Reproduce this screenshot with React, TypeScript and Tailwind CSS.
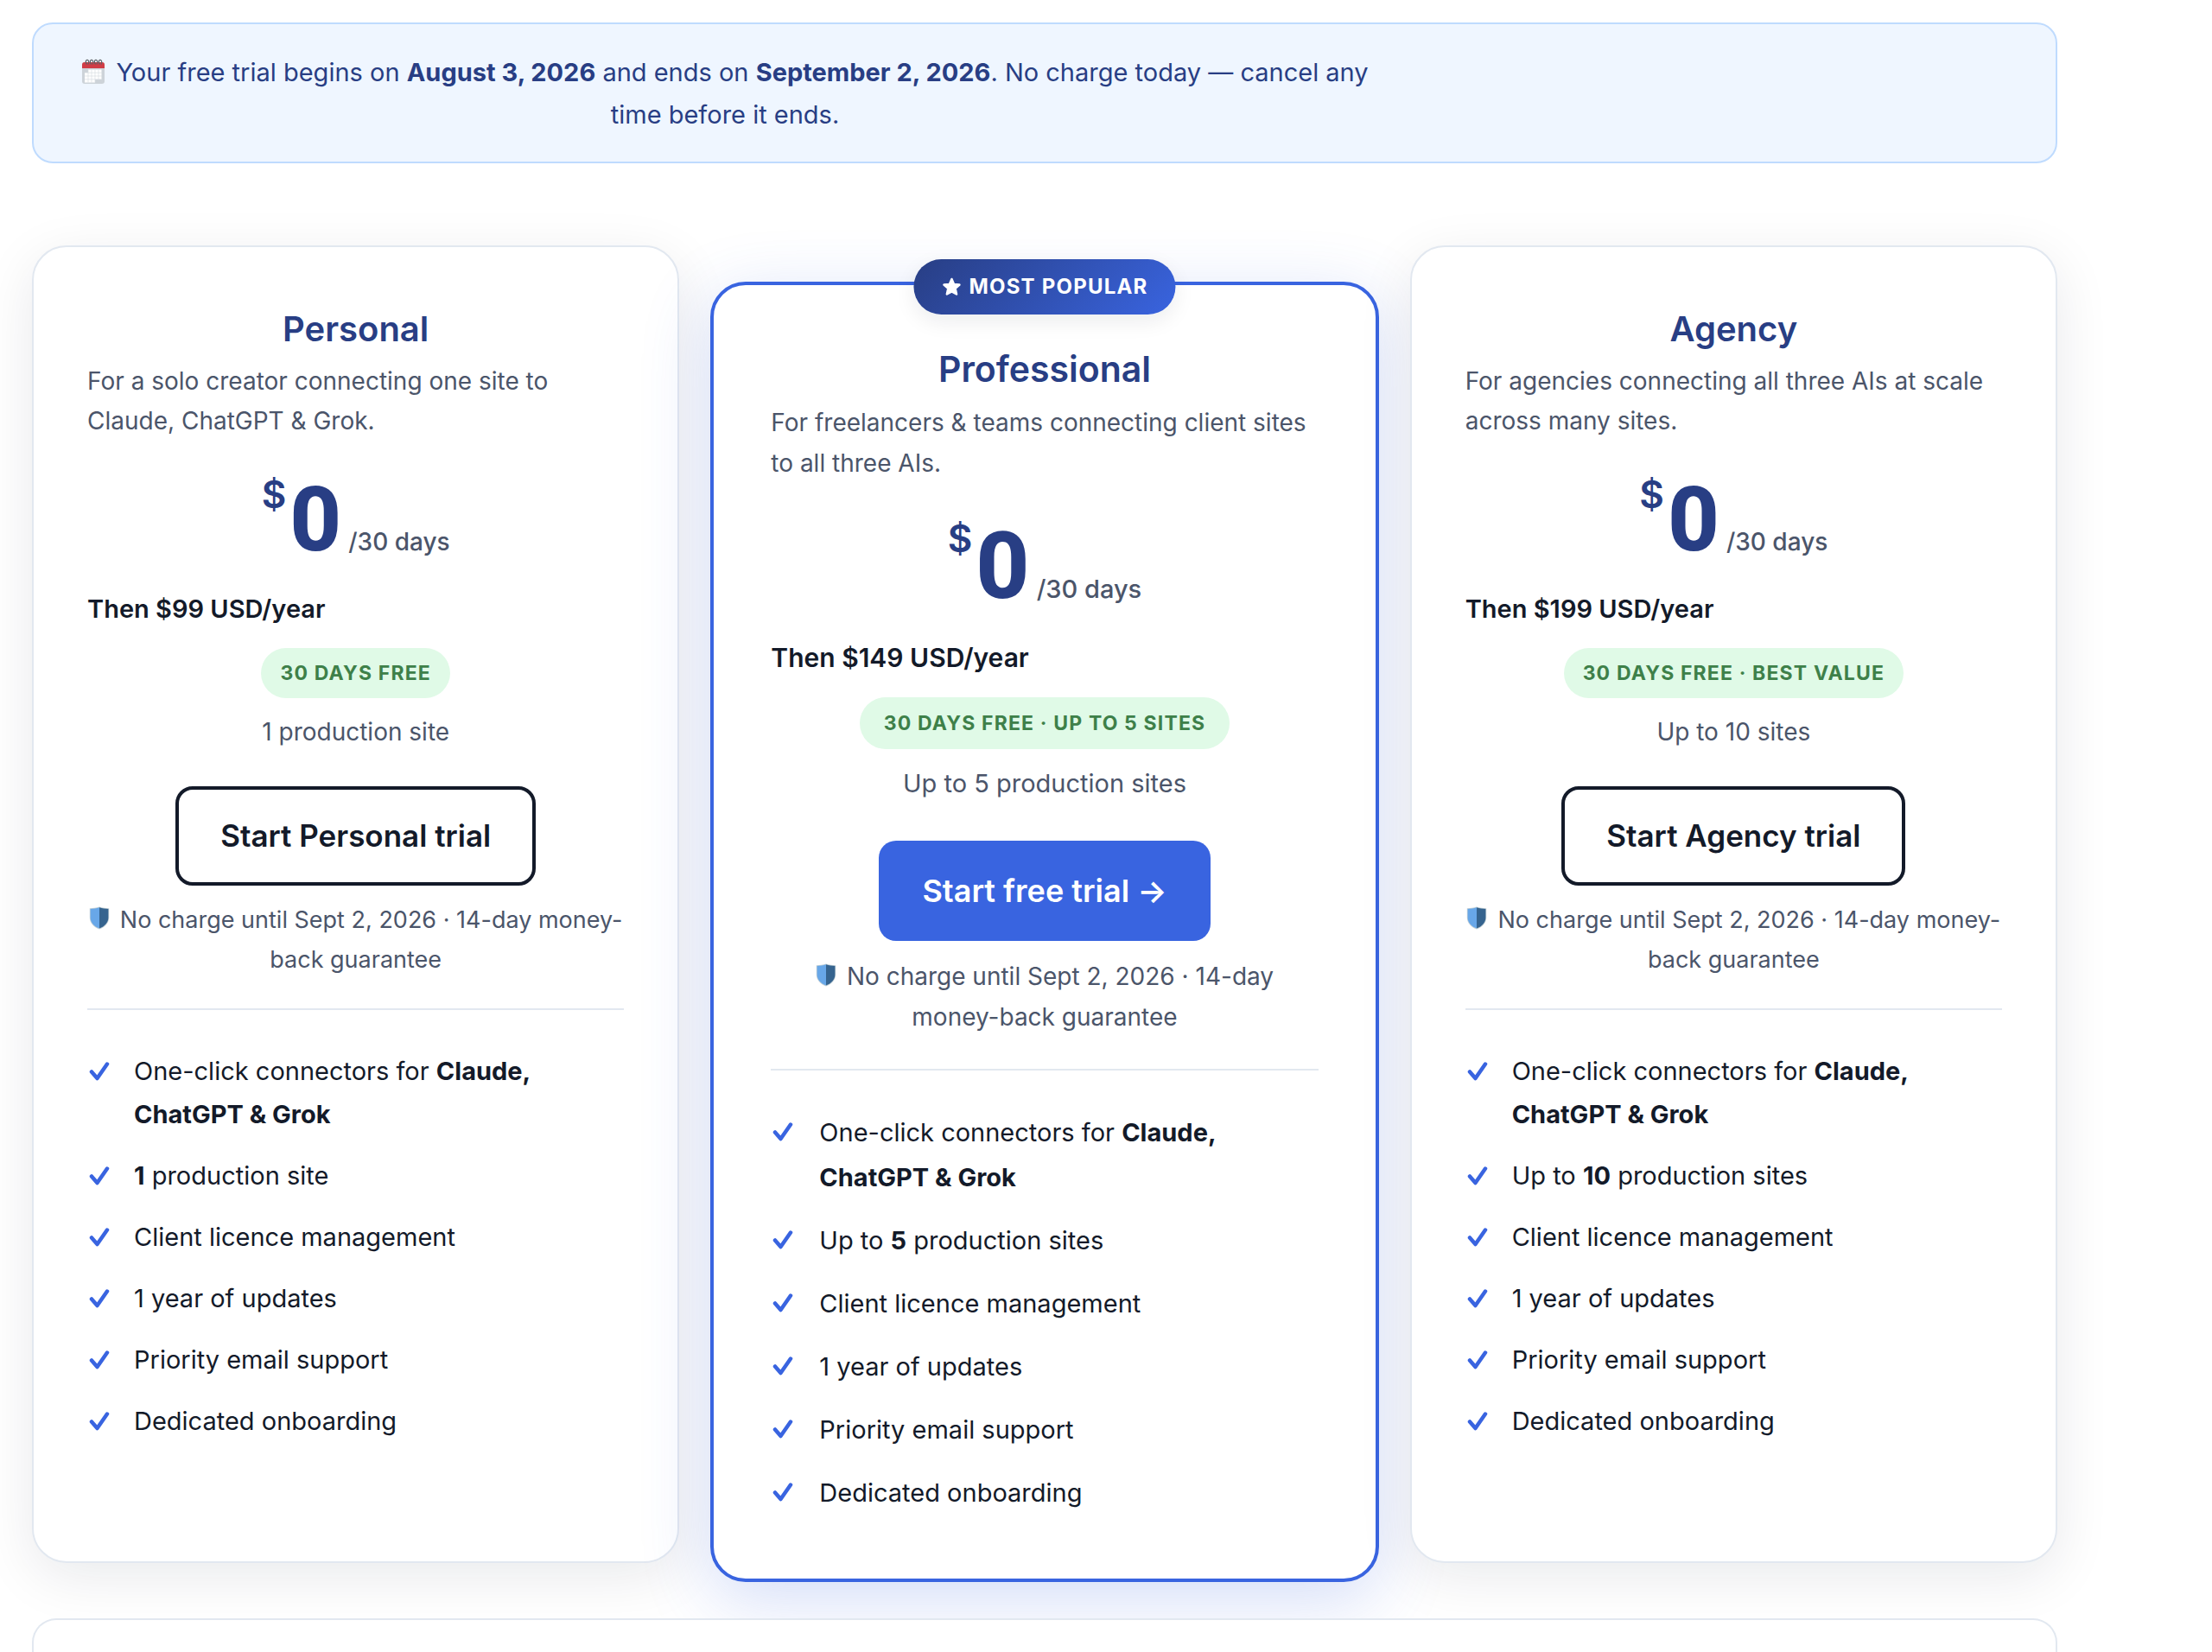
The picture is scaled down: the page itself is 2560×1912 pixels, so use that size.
import React from 'react';
import clsx from 'clsx';

interface Plan {
  name: string;
  description: string;
  price: string;
  badge: string;
  sites: string;
  cta: string;
  siteFeature: React.ReactNode;
  featured?: boolean;
}

const plans: Plan[] = [
  {
    name: 'Personal',
    description: 'For a solo creator connecting one site to Claude, ChatGPT & Grok.',
    price: 'Then $99 USD/year',
    badge: '30 days free',
    sites: '1 production site',
    cta: 'Start Personal trial',
    siteFeature: (
      <>
        <strong className="font-bold">1</strong> production site
      </>
    )
  },
  {
    name: 'Professional',
    description: 'For freelancers & teams connecting client sites to all three AIs.',
    price: 'Then $149 USD/year',
    badge: '30 days free · Up to 5 sites',
    sites: 'Up to 5 production sites',
    cta: 'Start free trial →',
    siteFeature: (
      <>
        Up to <strong className="font-bold">5</strong> production sites
      </>
    ),
    featured: true
  },
  {
    name: 'Agency',
    description: 'For agencies connecting all three AIs at scale across many sites.',
    price: 'Then $199 USD/year',
    badge: '30 days free · Best value',
    sites: 'Up to 10 sites',
    cta: 'Start Agency trial',
    siteFeature: (
      <>
        Up to <strong className="font-bold">10</strong> production sites
      </>
    )
  }
];

const CalendarIcon = () => (
  <svg viewBox="0 0 28 30" className="mr-3 inline-block h-[30px] w-7 align-[-4px]" aria-hidden="true">
    <rect x="1" y="4" width="26" height="25" rx="3" fill="#cdd3d9" />
    <path d="M1 11V7a3 3 0 0 1 3-3h20a3 3 0 0 1 3 3v4z" fill="#d03c46" />
    <path d="M8 12.5h15.500v11.500h-7.500v3.500h-12v-11.500h4z" fill="#fff" />
    <path d="M8 12.500v15M12 12.500v15M16 12.500v15M20 12.500v12M4 16.200h20M4 20h20M4 23.800h20" stroke="#d9dee3" strokeWidth=".7" />
    <g fill="none" stroke="#5c6166" strokeWidth="1.200">
      <path d="M6.500 6.500C3.500 2 7 0 8.500 2.500c.5 1 .5 2.500-.5 4" />
      <path d="M11.500 6.500C8.500 2 12 0 13.500 2.500c.5 1 .5 2.500-.5 4" />
      <path d="M16.500 6.500C13.500 2 17 0 18.500 2.500c.5 1 .5 2.500-.5 4" />
      <path d="M21.500 6.500C18.500 2 22 0 23.500 2.500c.5 1 .5 2.500-.5 4" />
    </g>
  </svg>
);

const ShieldIcon = () => (
  <svg viewBox="0 0 24 27" className="mr-3 inline-block h-[27px] w-6 align-[-2px]" aria-hidden="true">
    <path d="M12 .5C8.500 1.800 4.500 2.200.8 2.200V13c0 6 4.500 11 11.200 13.500C18.700 24 23.200 19 23.200 13V2.200C19.500 2.200 15.500 1.800 12 .5z" fill="#c3d0d6" />
    <path d="M12 1.300C8.700 2.500 5 3 1.600 3v10c0 5.500 4.200 10.200 10.400 12.600z" fill="#68a7e8" />
    <path d="M12 1.300C15.300 2.500 19 3 22.400 3v10c0 5.500-4.200 10.200-10.400 12.600z" fill="#36648f" />
  </svg>
);

const CheckIcon = () => (
  <svg viewBox="0 0 24 24" className="mt-[13px] ml-0.5 h-6 w-6 shrink-0" aria-hidden="true">
    <path d="M3 12.500 9.500 20 21 3.500" fill="none" stroke="#3964e0" strokeWidth="4.500" strokeLinecap="round" strokeLinejoin="round" />
  </svg>
);

const StarIcon = () => (
  <svg viewBox="0 0 24 24" className="h-6 w-6" aria-hidden="true">
    <path
      d="m12 3 2.600 6 6.400.6-4.800 4.300 1.400 6.600L12 17.300l-5.600 3.200 1.400-6.600L3 9.600 9.400 9z"
      fill="#fff"
      stroke="#fff"
      strokeWidth="2.500"
      strokeLinejoin="round"
    />
  </svg>
);

const PlanCard = ({ plan }: { plan: Plan }) => {
  const { featured } = plan;
  const features: React.ReactNode[] = [
    <>
      One-click connectors for <strong className="font-bold">Claude, ChatGPT & Grok</strong>
    </>,
    plan.siteFeature,
    'Client licence management',
    '1 year of updates',
    'Priority email support',
    'Dedicated onboarding'
  ];

  return (
    <section
      className={clsx(
        'relative flex flex-col items-center bg-white text-[#4b556a]',
        featured
          ? 'mt-[42px] -mb-[22px] rounded-[41px] border-4 border-[#3964e0] px-[66px] pt-[70px] pb-[73px] shadow-[0_20px_80px_rgba(57,100,224,0.22)]'
          : 'rounded-[40px] border-2 border-[#e2e8f0] px-[62px] pt-[69px] pb-[137px] shadow-[0_16px_64px_rgba(15,23,42,0.09)]'
      )}
    >
      {featured && (
        <div className="absolute -top-[30px] left-1/2 flex h-16 -translate-x-1/2 items-center gap-2 rounded-full bg-linear-135 from-[#283e84] to-[#3964e0] px-8 text-2xl font-bold tracking-wider whitespace-nowrap text-white uppercase shadow-[0_8px_24px_rgba(15,23,42,0.08)]">
          <StarIcon />
          Most popular
        </div>
      )}
      <h2
        className={clsx(
          'font-semibold text-[#283e84]',
          featured ? 'text-[41px] leading-[54px]' : 'text-[40px] leading-[52px]'
        )}
      >
        {plan.name}
      </h2>
      <p className={clsx('w-full text-[28px]', featured ? 'mt-3 leading-[47px]' : 'mt-[11px] leading-[46px]')}>
        {plan.description}
      </p>
      <div
        className={clsx(
          'flex items-baseline text-[#283e84]',
          featured ? 'mt-[42px] h-[104px]' : 'mt-[41px] h-[100px]'
        )}
      >
        <span className="mr-1 self-start text-[44px] leading-[42px] font-semibold">$</span>
        <span
          className={clsx(
            "font-['Roboto',sans-serif] font-extrabold",
            featured ? 'text-[108px] leading-[106px]' : 'text-[104px] leading-[102px]'
          )}
        >
          0
        </span>
        <span className={clsx('ml-2 font-medium text-[#4b556a]', featured ? 'text-[29px]' : 'text-[28px]')}>/30 days</span>
      </div>
      <p
        className={clsx(
          'mt-[31px] w-full font-semibold text-[#131a29]',
          featured ? 'text-[30px] leading-[48px]' : 'text-[29px] leading-[46px]'
        )}
      >
        {plan.price}
      </p>
      <p
        className={clsx(
          'mt-[22px] flex items-center rounded-full bg-[#e0fae7] text-[23px] font-bold tracking-wider text-[#3e8049] uppercase',
          featured ? 'h-[60px] px-7' : 'h-[58px] px-[22px]'
        )}
      >
        {plan.badge}
      </p>
      <p className={clsx('mt-4', featured ? 'text-[29px] leading-[48px]' : 'text-[28px] leading-[46px]')}>{plan.sites}</p>
      <button
        type="button"
        className={clsx(
          'cursor-pointer rounded-[20px] font-semibold',
          featured
            ? 'mt-[42px] h-[116px] bg-[#3964e0] px-[50px] text-[36px] text-white'
            : 'mt-10 h-[115px] border-4 border-[#131a29] bg-white px-12 text-[35px] text-[#131a29]'
        )}
      >
        {plan.cta}
      </button>
      <p
        className={clsx(
          'w-full text-center',
          featured ? 'mt-[18px] text-[28px] leading-[47px]' : 'mt-[17px] text-[27px] leading-[46px]'
        )}
      >
        <ShieldIcon />
        No charge until Sept 2, 2026 · 14-day money-back guarantee
      </p>
      <ul
        className={clsx(
          'flex w-full flex-col gap-[21px] border-t-2 border-[#e2e8f0] pt-[46px] text-[29px] text-[#131a29]',
          featured ? 'mt-[36px] leading-[52px]' : 'mt-[33px] leading-[50px]'
        )}
      >
        {features.map((feature, i) => (
          <li key={i} className={clsx('flex', featured ? 'gap-[30px]' : 'gap-7')}>
            <CheckIcon />
            <span>{feature}</span>
          </li>
        ))}
      </ul>
    </section>
  );
};

const App = () => {
  return (
    <main className="flex min-h-screen flex-col bg-white pt-[26px] pr-[179px] pl-[37px] font-['Inter',sans-serif]">
      <div className="rounded-3xl border-2 border-[#bfdbfe] bg-[#eff6ff] px-12 pt-[31px] pb-[30px]">
        <p className="max-w-[1504px] text-center text-[29px] leading-[49px] text-[#283e84]">
          <CalendarIcon />
          Your free trial begins on <strong className="font-bold">August 3, 2026</strong> and ends on{' '}
          <strong className="font-bold">September 2, 2026</strong>. No charge today — cancel any time before it ends.
        </p>
      </div>

      <div className="mt-[95px] grid grid-cols-[749fr_773fr_749fr] items-start gap-9">
        {plans.map((plan) => (
          <PlanCard key={plan.name} plan={plan} />
        ))}
      </div>

      <div className="relative mt-16 min-h-[38px] flex-1 rounded-t-[28px] border-2 border-b-0 border-[#e2e8f0] bg-white" />
    </main>
  );
};

export default App;
